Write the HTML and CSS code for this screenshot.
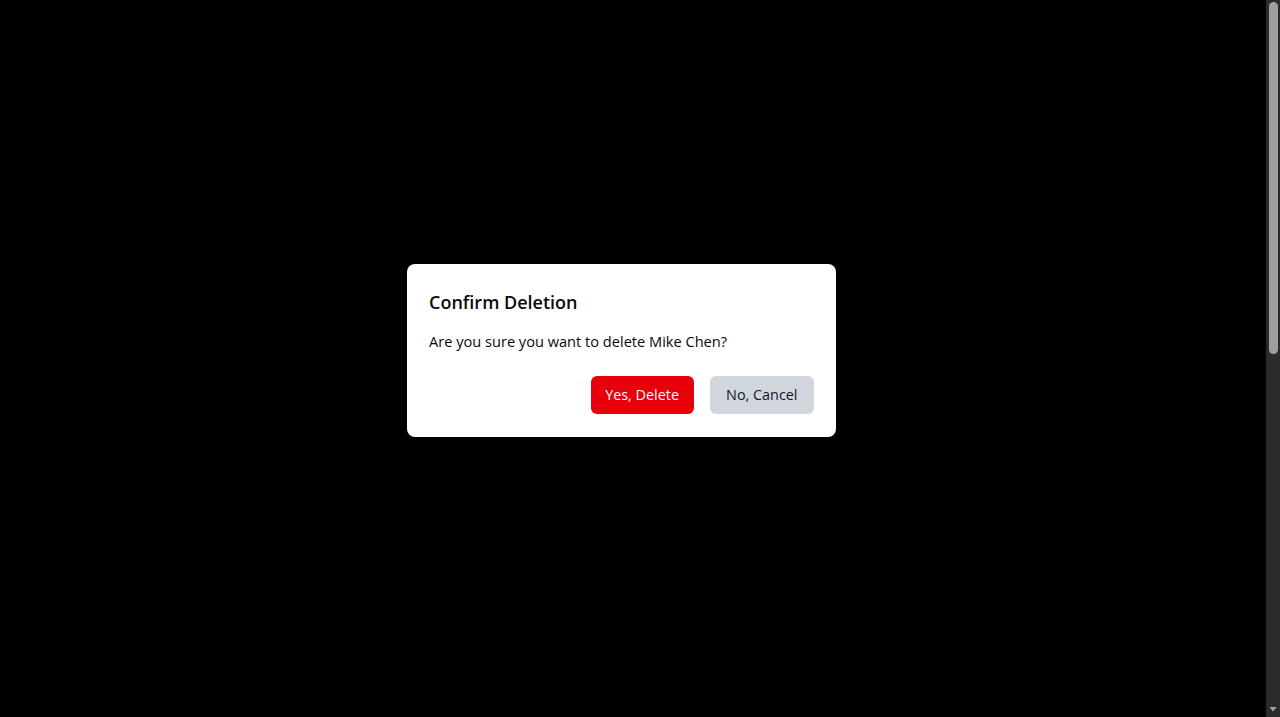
FILE: index.html
```html
<!DOCTYPE html>
<html lang="en">
<head>
<meta charset="utf-8">
<title>Confirm Deletion</title>
<link rel="stylesheet" href="styles.css">
</head>
<body>
<div class="screen">
  <div class="overlay">
    <div class="dialog" role="dialog" aria-labelledby="dlg-title">
      <h2 class="dialog-title" id="dlg-title">Confirm Deletion</h2>
      <p class="dialog-text">Are you sure you want to delete Mike Chen?</p>
      <div class="dialog-actions">
        <button class="btn btn-danger" type="button">Yes, Delete</button>
        <button class="btn btn-secondary" type="button">No, Cancel</button>
      </div>
    </div>
  </div>
  <div class="scrollbar" aria-hidden="true">
    <div class="scroll-track">
      <div class="scroll-thumb"></div>
    </div>
    <svg class="scroll-arrow" width="14" height="14" viewBox="0 0 14 14">
      <path d="M3.5 5 L10.5 5 L7 9.5 Z" fill="#a3a3a3"/>
    </svg>
  </div>
</div>
</body>
</html>
```
FILE: styles.css
```css
html, body {
  margin: 0;
  height: 100%;
  overflow: hidden;
  background: #000;
}
body {
  font-family: "Open Sans", "Noto Sans", "Liberation Sans", sans-serif;
}
.screen {
  display: flex;
  height: 100%;
}
.overlay {
  flex: 1;
  display: flex;
  align-items: center;
  justify-content: center;
  padding: 0 23px 16px 0;
  background: #000;
}
.dialog {
  box-sizing: border-box;
  width: 429px;
  background: #fff;
  border-radius: 8px;
  padding: 24px 22px 23px;
  color: #000;
}
.dialog-title {
  margin: 0 0 13px;
  font-size: 18px;
  line-height: 28px;
  font-weight: 600;
  color: #0a0a0a;
}
.dialog-text {
  margin: 0;
  font-size: 14.6px;
  line-height: 24px;
  color: #0a0a0a;
}
.dialog-actions {
  display: flex;
  justify-content: flex-end;
  gap: 16px;
  margin-top: 23px;
}
.btn {
  font-family: inherit;
  font-size: 14.4px;
  line-height: 24px;
  padding: 7px 15px;
  border: none;
  border-radius: 6px;
  cursor: pointer;
}
.btn-danger {
  padding: 7px 14.5px;
  background: #e7000b;
  color: #fff;
}
.btn-secondary {
  padding: 7px 16.5px;
  background: #d1d5dc;
  color: #101828;
}
.scrollbar {
  width: 14px;
  flex: none;
  display: flex;
  flex-direction: column;
  background: #2b2b2b;
}
.scroll-track {
  flex: 1;
  padding: 2px 2px 0 3px;
}
.scroll-thumb {
  height: 352px;
  border-radius: 5px;
  background: #9f9f9f;
}
.scroll-arrow {
  display: block;
  flex: none;
  margin-bottom: 1px;
}
```
